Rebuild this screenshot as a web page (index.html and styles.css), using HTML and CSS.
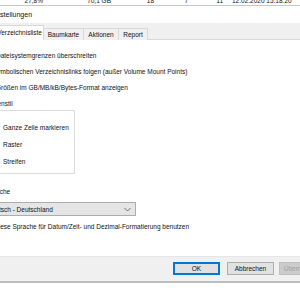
FILE: index.html
```html
<!DOCTYPE html>
<html lang="de">
  <head>
    <meta charset="UTF-8" />
    <title>Einstellungen</title>
    <link rel="stylesheet" href="styles.css">
  </head>
  <body>
    <div class="behind">
      <div class="cells">
        <span class="c1">27,8%</span>
        <span class="c2">70,1 GB</span>
        <span class="c3">18</span>
        <span class="c4">7</span>
        <span class="c5">11</span>
        <span class="c6">12.02.2020 15:18:20</span>
      </div>
    </div>

    <div class="dialog">
      <div class="titlebar">Einstellungen</div>

      <div class="tabs">
        <div class="tab active t1">Verzeichnisliste</div>
        <div class="tab t2">Baumkarte</div>
        <div class="tab t3">Aktionen</div>
        <div class="tab t4">Report</div>
      </div>

      <div class="panel">
        <div class="row check">Dateisystemgrenzen überschreiten</div>
        <div class="row check s2">Symbolischen Verzeichnislinks folgen (außer Volume Mount Points)</div>
        <div class="row check s3">Größen im GB/MB/kB/Bytes-Format anzeigen</div>

        <div class="group-label">Zeilenstil</div>
        <div class="group">
          <div class="radio">Ganze Zeile markieren</div>
          <div class="radio">Raster</div>
          <div class="radio">Streifen</div>
        </div>

        <div class="lang-label">Sprache</div>
        <div class="combo">
          <span class="combo-text">Deutsch - Deutschland</span>
          <svg class="chevron" width="7" height="5" viewBox="0 0 7 5">
            <path d="M0.5 1 L3.5 4 L6.5 1" stroke="#555" stroke-width="0.8" fill="none" />
          </svg>
        </div>
        <div class="row check s4">Diese Sprache für Datum/Zeit- und Dezimal-Formatierung benutzen</div>
      </div>

      <div class="footer">
        <button class="btn default">OK</button>
        <button class="btn">Abbrechen</button>
        <button class="btn disabled">Übernehmen</button>
      </div>
    </div>
  </body>
</html>
```

FILE: styles.css
```css
html,
body {
  margin: 0;
  padding: 0;
  width: 300px;
  height: 300px;
  overflow: hidden;
  background: #fff;
  font-family: "Liberation Sans", Arial, sans-serif;
  font-size: 6.5px;
  color: #111;
}

/* list window behind the dialog, only its last row shows */
.behind {
  height: 5px;
  overflow: hidden;
  border-bottom: 1px solid #c8c8c8;
}
.cells {
  display: flex;
  margin-top: -4px;
  line-height: 9px;
  white-space: nowrap;
}
.cells span {
  text-align: right;
  flex-shrink: 0;
}
.c1 { width: 43px; }
.c2 { width: 68px; }
.c3 { width: 43px; }
.c4 { width: 34px; }
.c5 { width: 35px; }
.c6 { width: 80px; text-align: left !important; padding-left: 9px; }

.dialog {
  width: 300px;
}

.titlebar {
  height: 17px;
  line-height: 17px;
  margin-left: -10px;
  font-size: 7px;
  white-space: nowrap;
}

.tabs {
  height: 17px;
  background: #f0f0f0;
  border-bottom: 1px solid #d9d9d9;
  display: flex;
  align-items: flex-end;
  box-sizing: border-box;
  white-space: nowrap;
}
.tab {
  height: 12px;
  line-height: 12px;
  border: 1px solid #d9d9d9;
  border-bottom: none;
  border-left: none;
  background: #f0f0f0;
  box-sizing: border-box;
  text-align: center;
  flex-shrink: 0;
  margin-bottom: -1px;
}
.tab.active {
  height: 15px;
  line-height: 13px;
  background: #fff;
  padding-bottom: 1px;
}
.t1 { width: 57px; margin-left: -13px; text-align: right; padding-right: 1px; }
.t2 { width: 40px; }
.t3 { width: 35px; }
.t4 { width: 29px; }

.panel {
  height: 216px;
  padding-top: 8px;
  box-sizing: border-box;
  white-space: nowrap;
}

.row {
  height: 16px;
  line-height: 16px;
}
.check {
  margin-left: -4px;
}
.check.s2 { margin-left: -7px; }
.check.s3 { margin-left: -4px; }
.check.s4 { margin-left: -6px; height: 10px; line-height: 10px; margin-top: 6px; }

.group-label {
  height: 10px;
  line-height: 10px;
  margin-top: 3px;
  margin-left: -13px;
}
.group {
  width: 90px;
  margin-left: -15px;
  margin-top: 1px;
  height: 64px;
  border: 1px solid #dcdcdc;
  box-sizing: border-box;
  padding: 8px 0 0 17px;
}
.radio {
  height: 17px;
  line-height: 17px;
}

.lang-label {
  height: 10px;
  line-height: 10px;
  margin-top: 13px;
  margin-left: -14px;
}
.combo {
  margin-top: 5px;
  height: 14px;
  width: 153px;
  margin-left: -17px;
  box-sizing: border-box;
  border: 1px solid #adadad;
  background: #e5e5e5;
  display: flex;
  align-items: center;
  justify-content: space-between;
  padding: 0 4px 0 3px;
}
.chevron {
  display: block;
}

.footer {
  height: 27px;
  background: #f0f0f0;
  border-top: 1px solid #e6e6e6;
  border-bottom: 2px solid #bcbcbc;
  box-sizing: border-box;
  display: flex;
  align-items: flex-start;
  padding: 5px 0 0 173px;
  gap: 7px;
}
.btn {
  flex-shrink: 0;
  width: 47px;
  height: 13px;
  margin: 0;
  padding: 0;
  font-family: inherit;
  font-size: 6.5px;
  color: #111;
  background: #e1e1e1;
  border: 1px solid #adadad;
  box-sizing: border-box;
}
.btn.default {
  border: 1px solid #0078d7;
  box-shadow: inset 0 0 0 1px #0078d7;
}
.btn.disabled {
  color: #a0a0a0;
  background: #cccccc;
  border-color: #bfbfbf;
  margin-left: -2px;
}
```
